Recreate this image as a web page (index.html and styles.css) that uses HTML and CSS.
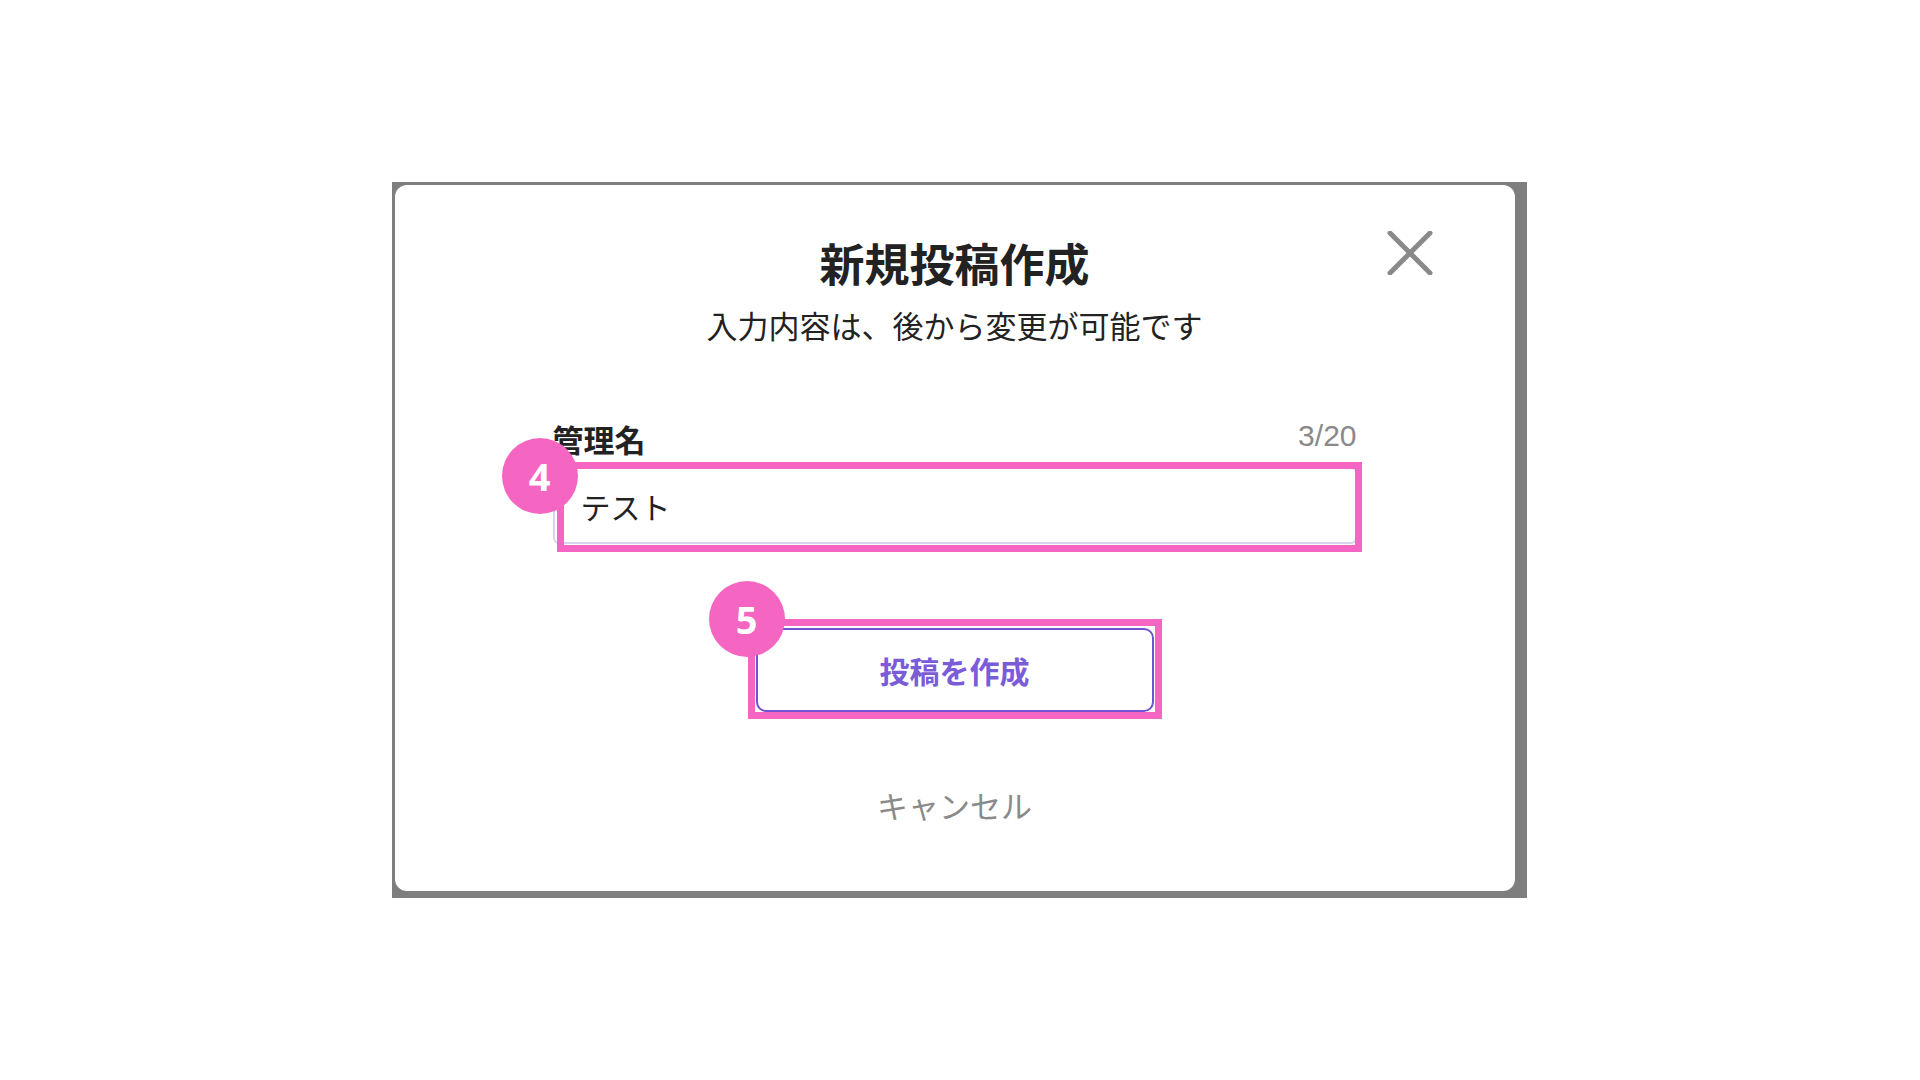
FILE: index.html
```html
<!DOCTYPE html>
<html lang="ja">
<head>
  <meta charset="UTF-8">
  <title>新規投稿作成</title>
  <link rel="stylesheet" href="styles.css">
</head>
<body>
  <div class="modal-frame">
    <div class="modal">
      <button class="close-btn" aria-label="閉じる">
        <svg width="46" height="44" viewBox="0 0 46 44">
          <line x1="3" y1="2" x2="43" y2="42" />
          <line x1="43" y1="2" x2="3" y2="42" />
        </svg>
      </button>

      <h1 class="title">新規投稿作成</h1>
      <p class="subtitle">入力内容は、後から変更が可能です</p>

      <div class="field">
        <div class="field-head">
          <span class="field-label">管理名</span>
          <span class="field-count">3/20</span>
        </div>
        <div class="input-wrap">
          <div class="input">テスト</div>
          <!-- 注釈 -->
          <div class="mark mark-input"></div>
          <div class="badge badge-input">4</div>
        </div>
      </div>

      <div class="submit-wrap">
        <button class="submit-btn">投稿を作成</button>
        <div class="mark mark-submit"></div>
        <div class="badge badge-submit">5</div>
      </div>

      <div class="cancel">キャンセル</div>
    </div>
  </div>
</body>
</html>
```

FILE: styles.css
```css
body {
  margin: 0;
  height: 100vh;
  background: #fff;
  font-family: "Noto Sans CJK JP", "Noto Sans", sans-serif;
  color: #222;
  display: flex;
  justify-content: center;
  align-items: flex-start;
}

.modal-frame {
  margin-top: 182px;
  margin-right: 2px;
  background: #7e7e7e;
  padding: 3px 12px 7px 3px;
}

.modal {
  position: relative;
  width: 1120px;
  background: #fff;
  border-radius: 12px;
  padding: 51px 0 65px;
  display: flex;
  flex-direction: column;
  align-items: center;
}

.close-btn {
  position: absolute;
  top: 46px;
  right: 82px;
  width: 46px;
  height: 44px;
  padding: 0;
  border: none;
  background: none;
  cursor: pointer;
}

.close-btn svg {
  display: block;
}

.close-btn line {
  stroke: #8a8a8a;
  stroke-width: 5;
  stroke-linecap: round;
}

.title {
  margin: 0;
  font-size: 45px;
  line-height: 54px;
  font-weight: 700;
  color: #222;
}

.subtitle {
  margin: 13px 0 0;
  font-size: 31px;
  line-height: 43px;
  color: #222;
}

.field {
  width: 804px;
  margin-top: 71px;
}

.field-head {
  display: flex;
  justify-content: space-between;
  align-items: center;
  height: 43px;
}

.field-label {
  font-size: 31px;
  font-weight: 700;
  line-height: 43px;
}

.field-count {
  font-family: "Liberation Sans", Arial, sans-serif;
  font-size: 30px;
  color: #8a8a8a;
  margin-bottom: 6px;
}

.input-wrap {
  position: relative;
  margin-top: 7px;
}

.input {
  height: 77px;
  box-sizing: border-box;
  border: 2px solid #d9d2f0;
  border-radius: 6px;
  padding: 0 26px;
  display: flex;
  align-items: center;
  font-size: 30px;
  color: #222;
}

.mark {
  position: absolute;
  border: 7px solid #f566c3;
  pointer-events: none;
}

.mark-input {
  left: 4px;
  right: -5px;
  top: -5px;
  bottom: -8px;
}

.badge {
  position: absolute;
  width: 76px;
  height: 76px;
  border-radius: 50%;
  background: #f566c3;
  color: #fff;
  font-family: "Open Sans", "Noto Sans", sans-serif;
  font-size: 38px;
  font-weight: 700;
  display: flex;
  justify-content: center;
  align-items: center;
}

.badge-input {
  left: -51px;
  top: -29px;
}

.submit-wrap {
  position: relative;
  margin-top: 84px;
}

.submit-btn {
  display: block;
  width: 398px;
  height: 84px;
  background: #fff;
  border: 2px solid #7152d2;
  border-radius: 10px;
  font-family: "Noto Sans CJK JP", sans-serif;
  font-size: 30px;
  font-weight: 700;
  color: #7a5bd8;
  cursor: pointer;
}

.mark-submit {
  left: -8px;
  right: -8px;
  top: -9px;
  bottom: -7px;
}

.badge-submit {
  left: -47px;
  top: -47px;
}

.cancel {
  margin-top: 71px;
  font-size: 31px;
  line-height: 43px;
  color: #8a8a8a;
}
```
